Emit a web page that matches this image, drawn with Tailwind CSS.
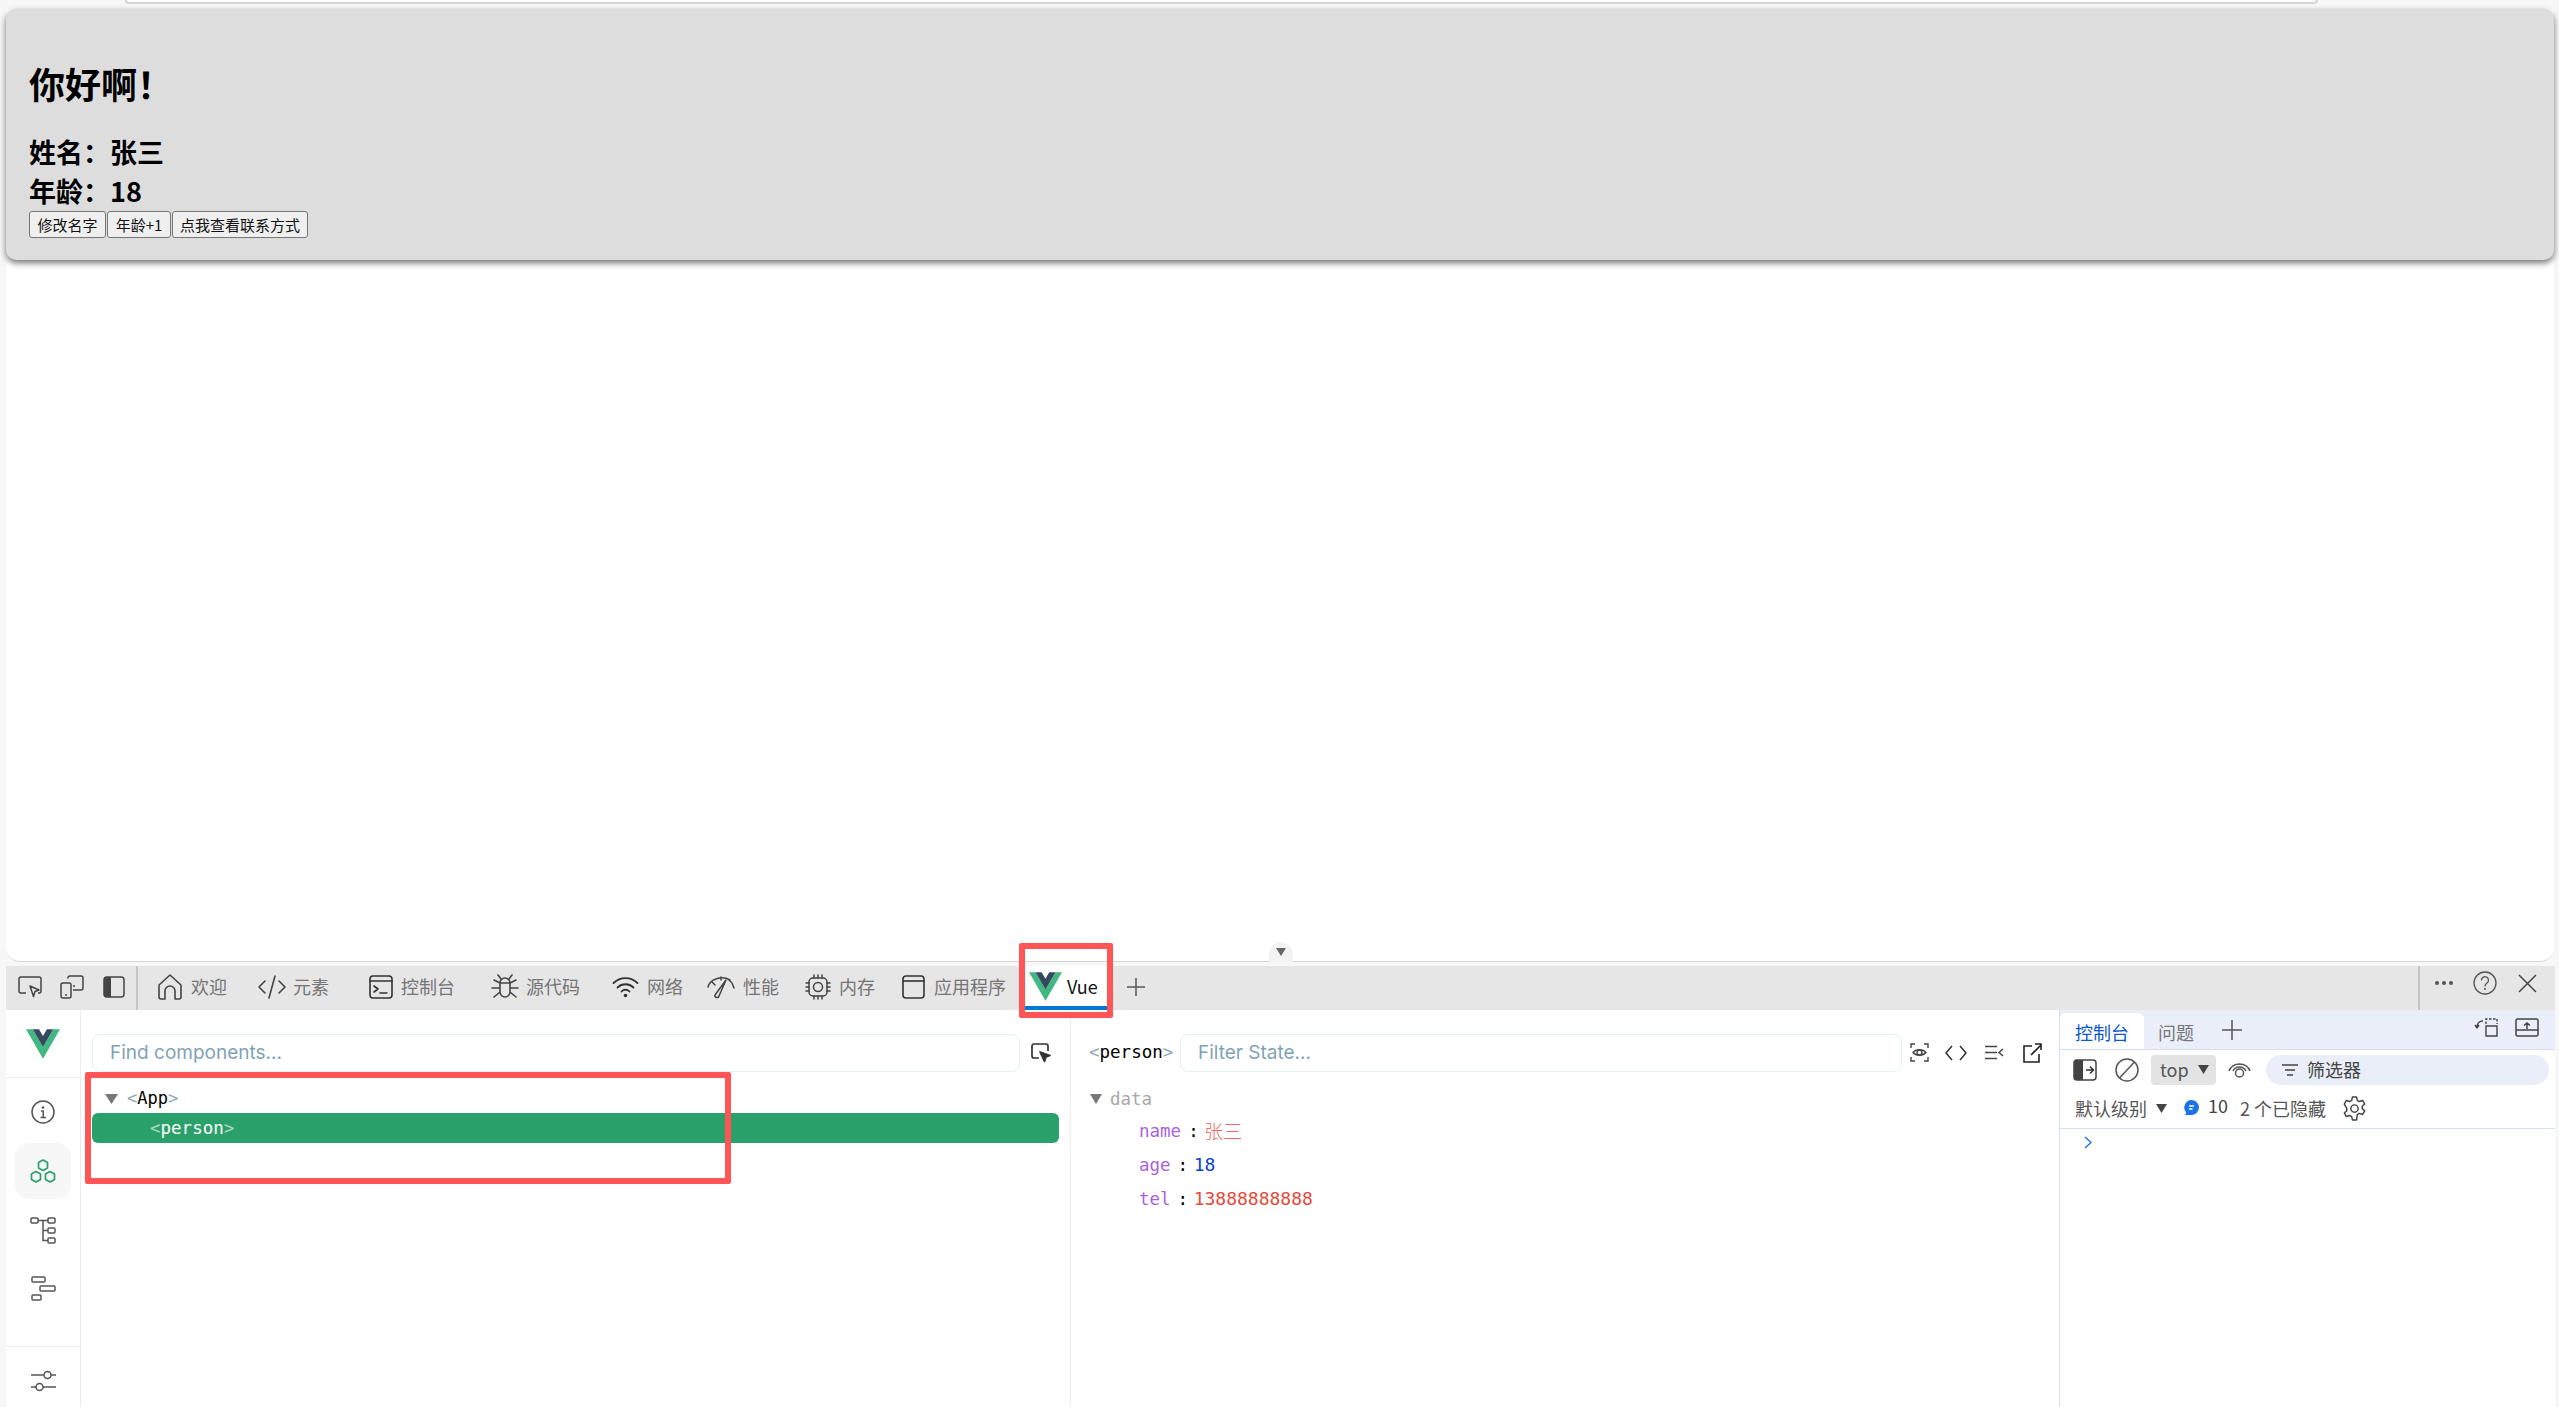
<!DOCTYPE html>
<html lang="en">
  <head>
    <meta charset="UTF-8" />
    <meta name="viewport" content="width=device-width, initial-scale=1.0" />
    <script src="https://cdn.jsdelivr.net/npm/@tailwindcss/browser@4"></script>
    <title>Vue Devtools</title>
  </head>
  <body class="h-[1407px] w-[2559px] overflow-hidden relative bg-[#f7f7f7] font-['Noto_Sans_CJK_SC',sans-serif]">
    <!-- address bar remainder -->
    <div class="h-[9px] pl-[125px] pr-[237px] w-[2555px]">
      <div class="h-[4px] bg-white border-b-2 border-x-2 border-[#d4d4d4] rounded-b-lg"></div>
    </div>

    <!-- page viewport -->
    <main class="ml-[6px] w-[2548px] h-[953px] bg-white rounded-b-[14px] border-b border-[#d6d6d6] relative">
      <section class="h-[251px] bg-[#dddddd] rounded-[10px] shadow-[0_3px_6px_rgba(0,0,0,0.55)] pl-[23px] pt-[52px] text-black">
        <h2 class="text-[36px] leading-[44px] font-bold">你好啊！</h2>
        <h2 class="mt-[27px] text-[27px] leading-[39px] font-bold">姓名：张三</h2>
        <h2 class="text-[27px] leading-[39px] font-bold">年龄：18</h2>
        <div class="flex gap-px mt-px">
          <button class="h-[27px] w-[77px] bg-[#efefef] border border-[#767676] rounded-[3px] text-[15px] leading-none text-[#111]">修改名字</button>
          <button class="h-[27px] w-[64px] bg-[#efefef] border border-[#767676] rounded-[3px] text-[15px] leading-none text-[#111]">年龄+1</button>
          <button class="h-[27px] w-[136px] bg-[#efefef] border border-[#767676] rounded-[3px] text-[15px] leading-none text-[#111]">点我查看联系方式</button>
        </div>
      </section>
      <div class="absolute left-[1263px] bottom-[-1px] w-[24px] h-[20px] bg-[#f3f3f3] rounded-t-full flex justify-center items-center">
        <svg class="w-[12px] h-[10px]" viewBox="0 0 12 10"><path d="M1 1h10L6 9z" fill="#666" /></svg>
      </div>
    </main>

    <!-- devtools tab strip -->
    <div class="mt-[4px] ml-[6px] w-[2549px] h-[44px] pb-[2px] bg-[#e6e6e6] flex items-center text-[18px] text-[#757575]">
      <svg class="ml-[12px] w-[24px] h-[24px]" viewBox="0 0 24 24" fill="none" stroke="#444" stroke-width="1.5" stroke-linejoin="round"><path d="M8 18H3a2 2 0 0 1-2-2V4a2 2 0 0 1 2-2h18a2 2 0 0 1 2 2v12a2 2 0 0 1-2 2h-1" /><path d="M12 11l9 4-4 1.5-1.500 5z" /></svg>
      <svg class="ml-[18px] w-[24px] h-[24px]" viewBox="0 0 24 24" fill="none" stroke="#444" stroke-width="1.5" stroke-linejoin="round"><path d="M8 3.500V3a2 2 0 0 1 2-2h11a2 2 0 0 1 2 2v10a2 2 0 0 1-2 2h-8" /><rect x="1" y="8" width="10" height="15" rx="2" /><path d="M5 20h2M15 11h-2" /></svg>
      <svg class="ml-[19px] w-[22px] h-[22px]" viewBox="0 0 22 22"><rect x="1" y="1" width="20" height="20" rx="3" fill="none" stroke="#444" stroke-width="1.5" /><path d="M4 1h4v20H4a3 3 0 0 1-3-3V4a3 3 0 0 1 3-3z" fill="#444" /></svg>
      <div class="ml-[11px] w-[2px] h-[44px] self-start bg-[#c4c7c8]"></div>

      <svg class="ml-[20px] w-[24px] h-[26px]" viewBox="0 0 24 26" fill="none" stroke="#444" stroke-width="1.6" stroke-linejoin="round"><path d="M1 11 12 1l11 10v12a2 2 0 0 1-2 2h-4v-8a5 5 0 0 0-10 0v8H3a2 2 0 0 1-2-2z" /></svg>
      <span class="ml-[9px] w-[37px] -mt-[2px]">欢迎</span>
      <svg class="ml-[30px] w-[28px] h-[26px]" viewBox="0 0 28 26" fill="none" stroke="#444" stroke-width="1.6" stroke-linecap="round" stroke-linejoin="round"><path d="M7 7l-6 6 6 6M21 7l6 6-6 6M17 2l-6 22" /></svg>
      <span class="ml-[7px] w-[37px] -mt-[2px]">元素</span>
      <svg class="ml-[39px] w-[24px] h-[24px]" viewBox="0 0 24 24" fill="none" stroke="#333" stroke-width="1.6" stroke-linecap="round" stroke-linejoin="round"><rect x="1" y="1" width="22" height="22" rx="3" /><path d="M1 6h22M5 11l4 3-4 3M11 18h7" /></svg>
      <span class="ml-[8px] w-[55px] -mt-[2px]">控制台</span>
      <svg class="ml-[35px] w-[28px] h-[26px]" viewBox="0 0 28 26" fill="none" stroke="#444" stroke-width="1.6" stroke-linecap="round" stroke-linejoin="round"><path d="M9 9a5 5 0 0 1 10 0v9a5 5 0 0 1-10 0zM10 5 7 1M18 5l3-4M9 9 3 6M19 9l6-3M9 14H1M19 14h8M9 18l-6 5M19 18l6 5M9 9h10" /></svg>
      <span class="ml-[7px] w-[55px] -mt-[2px] whitespace-nowrap">源代码</span>
      <svg class="ml-[31px] w-[27px] h-[22px]" viewBox="0 0 27 22" fill="none" stroke="#333" stroke-width="1.8" stroke-linecap="round"><path d="M1.500 7a17 17 0 0 1 24 0M5.500 11.500a11.500 11.500 0 0 1 16 0M9.500 15.500a5.500 5.500 0 0 1 8 0" /><circle cx="13.500" cy="19.500" r="1.800" fill="#333" stroke="none" /></svg>
      <span class="ml-[8px] w-[36px] -mt-[2px]">网络</span>
      <svg class="ml-[24px] w-[28px] h-[24px]" viewBox="0 0 28 24" fill="none" stroke="#444" stroke-width="1.5" stroke-linecap="round" stroke-linejoin="round"><path d="M1 12A14 11 0 0 1 23 5M25 8l2 5M5 7l3 3M14 2v3M22 5l2 2" /><path d="M19 5 12 21a2 2 0 0 1-4-1z" /></svg>
      <span class="ml-[8px] w-[36px] -mt-[2px] whitespace-nowrap">性能</span>
      <svg class="ml-[26px] w-[26px] h-[26px]" viewBox="0 0 26 26" fill="none" stroke="#444" stroke-width="1.5" stroke-linecap="round"><rect x="4" y="4" width="18" height="18" rx="4" /><circle cx="13" cy="13" r="4.500" /><path d="M9 1v3M13 1v3M17 1v3M9 22v3M13 22v3M17 22v3M1 9h3M1 13h3M1 17h3M22 9h3M22 13h3M22 17h3" /></svg>
      <span class="ml-[8px] w-[36px] -mt-[2px]">内存</span>
      <svg class="ml-[27px] w-[23px] h-[24px]" viewBox="0 0 23 24" fill="none" stroke="#333" stroke-width="1.6"><rect x="1" y="1" width="21" height="22" rx="3" /><path d="M1 6h21" /></svg>
      <span class="ml-[9px] w-[73px] -mt-[2px] whitespace-nowrap">应用程序</span>

      <!-- active tab -->
      <div class="ml-[17px] w-[83px] h-[44px] self-start bg-white border-b-[4px] border-[#0078d4] flex items-center pl-[5px]">
        <svg class="w-[33px] h-[29px]" viewBox="0 0 256 221"><path d="M0 0l128 220.800L256 0h-51.200L128 132.480 50.560 0H0z" fill="#41B883" /><path d="M50.560 0L128 133.120 204.800 0h-47.360L128 51.200 97.920 0H50.560z" fill="#35495E" /></svg>
        <span class="ml-[5px] text-[#111]">Vue</span>
      </div>
      <svg class="ml-[19px] w-[20px] h-[20px]" viewBox="0 0 20 20" stroke="#555" stroke-width="1.500"><path d="M10 1v18M1 10h18" /></svg>

      <div class="ml-auto w-[2px] h-[44px] self-start bg-[#c4c7c8]"></div>
      <div class="flex gap-[3px] ml-[15px] mb-[8px]">
        <span class="w-[4px] h-[4px] rounded-full bg-[#555]"></span>
        <span class="w-[4px] h-[4px] rounded-full bg-[#555]"></span>
        <span class="w-[4px] h-[4px] rounded-full bg-[#555]"></span>
      </div>
      <svg class="ml-[20px] mb-[8px] w-[24px] h-[24px]" viewBox="0 0 24 24" fill="none" stroke="#555" stroke-width="1.300"><circle cx="12" cy="12" r="11" /><path d="M8.500 9a3.500 3.500 0 1 1 5.500 3c-1.300.9-2 1.500-2 3" stroke-linecap="round" /><circle cx="12" cy="18" r="1" fill="#555" stroke="none" /></svg>
      <svg class="ml-[21px] mr-[18px] mb-[8px] w-[19px] h-[19px]" viewBox="0 0 19 19" stroke="#444" stroke-width="1.500"><path d="M1 1l17 17M18 1 1 18" /></svg>
    </div>

    <!-- devtools body -->
    <div class="ml-[6px] w-[2549px] h-[397px] bg-white flex">
      <!-- vue sidebar -->
      <aside class="w-[75px] border-r border-[#ececec] flex flex-col items-center">
        <div class="w-full h-[68px] border-b border-[#ececec] flex justify-center pt-[19px]">
          <svg class="w-[34px] h-[30px]" viewBox="0 0 256 221"><path d="M0 0l128 220.800L256 0h-51.200L128 132.480 50.560 0H0z" fill="#41B883" /><path d="M50.560 0L128 133.120 204.800 0h-47.360L128 51.200 97.920 0H50.560z" fill="#35495E" /></svg>
        </div>
        <svg class="mt-[22px] w-[24px] h-[24px]" viewBox="0 0 24 24" fill="none" stroke="#555" stroke-width="1.500"><circle cx="12" cy="12" r="11" /><path d="M10 11h2.200v6.500M9.500 17.500h5.500" /><circle cx="12" cy="7.500" r="1.300" fill="#555" stroke="none" /></svg>
        <div class="mt-[19px] w-[56px] h-[56px] rounded-[14px] bg-[#f7f7f7] flex items-center justify-center">
          <svg class="w-[26px] h-[24px]" viewBox="0 0 26 24" fill="none" stroke="#2aa06a" stroke-width="1.700" stroke-linejoin="round"><path d="M13 1l4.500 2.600v5.300L13 11.500 8.500 8.900V3.600zM6 12.500l4.500 2.600v5.300L6 23l-4.500-2.600v-5.300zM20 12.500l4.500 2.600v5.300L20 23l-4.500-2.600v-5.300z" /></svg>
        </div>
        <svg class="mt-[18px] w-[26px] h-[27px]" viewBox="0 0 26 27" fill="none" stroke="#555" stroke-width="1.500"><rect x="1" y="1" width="7" height="5" rx="1" /><rect x="18" y="1" width="7" height="5" rx="1" /><rect x="18" y="11" width="7" height="5" rx="1" /><rect x="18" y="21" width="7" height="5" rx="1" /><path d="M8 3.500h10M13 3.500V23.500h5M13 13.500h5" /></svg>
        <svg class="mt-[32px] w-[25px] h-[25px]" viewBox="0 0 25 25" fill="none" stroke="#555" stroke-width="1.500"><rect x="1" y="1" width="13" height="5" rx="1" /><rect x="9" y="10" width="15" height="5" rx="1" /><rect x="1" y="19" width="9" height="5" rx="1" /></svg>
        <div class="mt-auto w-full h-[61px] border-t border-[#ececec] flex justify-center pt-[23px]">
          <svg class="w-[25px] h-[22px]" viewBox="0 0 25 22" fill="none" stroke="#555" stroke-width="1.500"><path d="M0 5h13M20 5h5M0 17h5M12 17h13" /><circle cx="16.500" cy="5" r="3.500" /><circle cx="8.500" cy="17" r="3.500" /></svg>
        </div>
      </aside>

      <!-- components tree -->
      <section class="w-[990px] border-r border-[#ececec]">
        <div class="flex items-center h-[62px] pt-[23px]">
          <input placeholder="Find components..." class="ml-[11px] w-[928px] h-[38px] pl-[17px] pr-[18px] border border-[#e3f3ef] rounded-lg text-[19px] font-['Inter',sans-serif] placeholder:text-[#7fa3b6]" />
          <svg class="ml-[11px] w-[20px] h-[20px]" viewBox="0 0 20 20" fill="none" stroke="#333" stroke-width="1.700" stroke-linejoin="round"><path d="M8 15H3a2 2 0 0 1-2-2V3a2 2 0 0 1 2-2h12a2 2 0 0 1 2 2v5" /><path d="M9 9l10 3.500-4 1.500-1.500 4.500z" fill="#333" /></svg>
        </div>
        <div class="flex items-center h-[27px] mt-[13px] pl-[24px] font-['DejaVu_Sans_Mono',monospace] text-[17px] text-black">
          <svg class="w-[13px] h-[10px]" viewBox="0 0 13 10"><path d="M0 0h13L6.500 10z" fill="#777" /></svg>
          <span class="ml-[9px]"><span class="text-[#8fa9bd]">&lt;</span>App<span class="text-[#8fa9bd]">&gt;</span></span>
        </div>
        <div class="ml-[11px] w-[967px] h-[30px] mt-[1px] bg-[#2aa06a] rounded-md flex items-center pl-[58px] font-['DejaVu_Sans_Mono',monospace] text-[17.500px] text-white">
          <span><span class="text-white/60">&lt;</span>person<span class="text-white/60">&gt;</span></span>
        </div>
      </section>

      <!-- state inspector -->
      <section class="w-[988px] relative">
        <div class="flex items-center h-[62px] pt-[23px] pl-[18px]">
          <span class="w-[91px] font-['DejaVu_Sans_Mono',monospace] text-[17.500px] text-black whitespace-nowrap"><span class="text-[#8fa9bd]">&lt;</span>person<span class="text-[#8fa9bd]">&gt;</span></span>
          <input placeholder="Filter State..." class="w-[722px] h-[38px] pl-[17px] pr-[18px] border border-[#e3f3ef] rounded-lg text-[19px] font-['Inter',sans-serif] placeholder:text-[#7fa3b6]" />
          <svg class="ml-[8px] w-[19px] h-[19px]" viewBox="0 0 19 19" fill="none" stroke="#444" stroke-width="1.400"><path d="M1 5V1h4M14 1h4v4M18 14v4h-4M5 18H1v-4" /><path d="M3 9.500a7.500 5.500 0 0 1 13 0 7.500 5.500 0 0 1-13 0z" /><circle cx="9.500" cy="9.500" r="2.500" /></svg>
          <svg class="ml-[16px] w-[22px] h-[16px]" viewBox="0 0 22 16" fill="none" stroke="#333" stroke-width="1.500"><path d="M7 1 1 8l6 7M15 1l6 7-6 7" /></svg>
          <svg class="ml-[18px] w-[19px] h-[15px]" viewBox="0 0 19 15" fill="none" stroke="#444" stroke-width="1.500"><path d="M0 1.500h12M0 7.500h12M0 13.500h12M18 4l-4 3.500 4 3.500" /></svg>
          <svg class="ml-[19px] w-[19px] h-[20px]" viewBox="0 0 19 20" fill="none" stroke="#222" stroke-width="1.600"><path d="M9 3H1v16h15v-8M8 12 18 2M12 1h6v6" /></svg>
        </div>
        <div class="pl-[19px] mt-[13px] font-['DejaVu_Sans_Mono',monospace] text-[17.500px] leading-[34px]">
          <div class="flex items-center h-[27px]">
            <svg class="w-[12px] h-[10px]" viewBox="0 0 12 10"><path d="M0 0h12L6 10z" fill="#777" /></svg>
            <span class="ml-[8px] text-[#a8a8a8]">data</span>
          </div>
          <div class="pl-[49px] pt-[2px] text-[#a862dc]">
            <div class="flex"><span>name</span><span class="ml-[7px] text-black">:</span><span class="ml-[5.500px] text-[#ee6a62] text-[19px] font-['Noto_Sans_CJK_SC',sans-serif] font-light">张三</span></div>
            <div class="flex"><span>age</span><span class="ml-[7px] text-black">:</span><span class="ml-[5.500px] text-[#0a3fd8] text-[18px]">18</span></div>
            <div class="flex"><span>tel</span><span class="ml-[7px] text-black">:</span><span class="ml-[5.500px] text-[#e8483a] text-[18px]">13888888888</span></div>
          </div>
        </div>
      </section>

      <!-- drawer -->
      <section class="flex-1 border-l border-[#d5e0f5] text-[18px]">
        <div class="h-[40px] bg-[#e9eef8] border-b border-[#d5e0f5] flex items-end">
          <div class="w-[84px] h-[36px] bg-white rounded-t-md text-center text-[#0b57d0] leading-[38px]">控制台</div>
          <div class="ml-[14px] h-[36px] leading-[38px] text-[#777]">问题</div>
          <svg class="ml-[28px] mb-[9px] w-[20px] h-[20px]" viewBox="0 0 20 20" stroke="#555" stroke-width="1.500"><path d="M10 0v20M0 10h20" /></svg>
          <svg class="ml-auto mb-[12px] w-[24px] h-[19px]" viewBox="0 0 24 19" fill="none" stroke="#444" stroke-width="1.400"><path d="M12 6V1h11v5" stroke-dasharray="2.500 1.500" /><path d="M12 8h11v10H12z" /><path d="M9 3C5 3 3 5 3 10M3 10 1 7M3 10l2-3" /></svg>
          <svg class="ml-[17px] mr-[16px] mb-[12px] w-[24px] h-[19px]" viewBox="0 0 24 19" fill="none" stroke="#444" stroke-width="1.500"><rect x="1" y="1" width="22" height="17" rx="1.500" /><path d="M1 12h22M12 11V5M9 7.500 12 5l3 2.500" /></svg>
        </div>
        <div class="h-[38px] flex items-center pt-[1px]">
          <svg class="ml-[13px] w-[24px] h-[22px]" viewBox="0 0 24 22"><rect x="1" y="1" width="22" height="20" rx="3" fill="none" stroke="#444" stroke-width="1.500" /><path d="M4 1h6v20H4a3 3 0 0 1-3-3V4a3 3 0 0 1 3-3z" fill="#444" /><path d="M13 11h7M17 7.500l3.500 3.500-3.500 3.500" fill="none" stroke="#333" stroke-width="1.500" /></svg>
          <svg class="ml-[18px] w-[24px] h-[24px]" viewBox="0 0 24 24" fill="none" stroke="#555" stroke-width="1.500"><circle cx="12" cy="12" r="11" /><path d="M4.500 20 19.500 4" /></svg>
          <div class="ml-[12px] w-[65px] h-[30px] bg-[#e3e3e3] rounded flex items-center pl-[9px] text-[#555]">
            <span>top</span>
            <svg class="ml-[9px] w-[11px] h-[9px]" viewBox="0 0 11 9"><path d="M0 0h11L5.500 9z" fill="#444" /></svg>
          </div>
          <svg class="ml-[12px] w-[23px] h-[20px]" viewBox="0 0 23 20" fill="none" stroke="#555" stroke-width="1.500"><path d="M1 11a11 10 0 0 1 21 0" /><path d="M5 11a7 6.500 0 0 1 13 0" /><circle cx="11.500" cy="13" r="4" /></svg>
          <div class="ml-[15px] w-[283px] h-[30px] rounded-full bg-[#e9eef8] flex items-center pl-[16px] text-[#444]">
            <svg class="w-[16px] h-[12px]" viewBox="0 0 16 12" stroke="#444" stroke-width="1.500"><path d="M0 1h16M3 6h10M5 11h6" /></svg>
            <span class="ml-[9px]">筛选器</span>
          </div>
        </div>
        <div class="h-[41px] border-b border-[#d5e0f5] flex items-center text-[#555]">
          <span class="ml-[15px] w-[70px] whitespace-nowrap">默认级别</span>
          <svg class="ml-[11px] w-[11px] h-[9px]" viewBox="0 0 11 9"><path d="M0 0h11L5.500 9z" fill="#444" /></svg>
          <svg class="ml-[17px] w-[15px] h-[16px]" viewBox="0 0 15 16"><path d="M7.500 0a7.500 7.500 0 0 1 0 15H1l1.300-2.400A7.500 7.500 0 0 1 7.500 0z" fill="#1a73e8" /><path d="M5 6h5M5 9h3.500" stroke="#fff" stroke-width="1.300" /></svg>
          <span class="ml-[9px] text-[#444] relative top-[-3px]">10</span>
          <span class="ml-[12px] w-[88px] whitespace-nowrap">2 个已隐藏</span>
          <svg class="ml-[14px] w-[25px] h-[25px]" viewBox="0 0 24 24" fill="none" stroke="#444" stroke-width="1.400" stroke-linejoin="round"><path d="M10 1h4l.7 3.200 2 1.100 3.100-1 2 3.400-2.400 2.200v2.200l2.400 2.200-2 3.400-3.100-1-2 1.100L14 23h-4l-.7-3.200-2-1.100-3.100 1-2-3.400 2.400-2.200v-2.200L2.200 7.700l2-3.400 3.100 1 2-1.100z" /><circle cx="12" cy="12" r="3.500" /></svg>
        </div>
        <svg class="ml-[24px] mt-[7px] w-[8px] h-[13px]" viewBox="0 0 8 13" fill="none" stroke="#1a73e8" stroke-width="1.400"><path d="M1 1l6 5.500L1 12" /></svg>
      </section>
    </div>

    <!-- red annotation boxes -->
    <div class="absolute left-[85px] top-[1072px] w-[646px] h-[112px] border-[6px] border-[#ff5555] rounded-[2px]"></div>
    <div class="absolute left-[1019px] top-[943px] w-[94px] h-[75px] border-[6px] border-[#ff5555] rounded-[2px]"></div>
  </body>
</html>
